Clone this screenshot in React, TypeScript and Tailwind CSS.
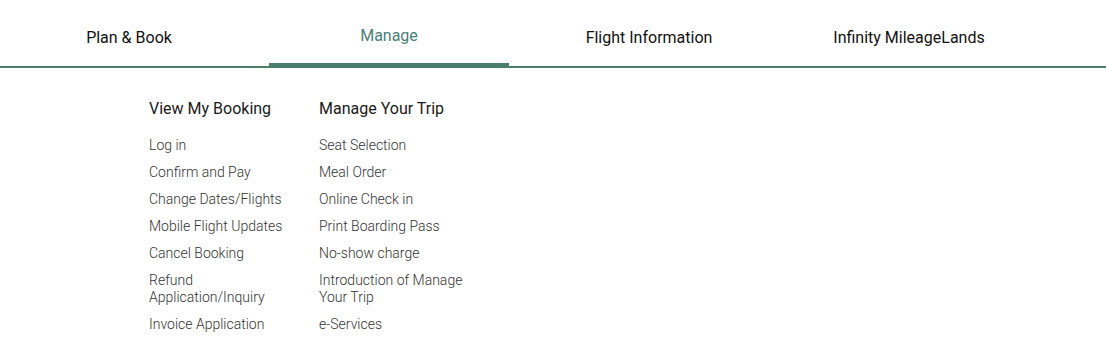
const TABS = ["Plan & Book", "Manage", "Flight Information", "Infinity MileageLands"];

const COLUMNS = [
  {
    title: "View My Booking",
    links: [
      "Log in",
      "Confirm and Pay",
      "Change Dates/Flights",
      "Mobile Flight Updates",
      "Cancel Booking",
      "Refund Application/Inquiry",
      "Invoice Application",
    ],
  },
  {
    title: "Manage Your Trip",
    links: [
      "Seat Selection",
      "Meal Order",
      "Online Check in",
      "Print Boarding Pass",
      "No-show charge",
      "Introduction of Manage Your Trip",
      "e-Services",
    ],
  },
];

export default function App() {
  return (
    <div className="h-[358px] w-full bg-white font-['Roboto',sans-serif]">
      {/* Top tabs */}
      <nav className="flex h-[68px] border-b-2 border-[#4b7d6b] pl-[9px]">
        {TABS.map((tab) => {
          const active = tab === "Manage";
          return (
            <div key={tab} className="relative mr-[20px] w-[240px]">
              <a
                href="#"
                className={
                  active
                    ? "flex h-full items-center justify-center pt-[6px] text-[16px] text-[#4a8078]"
                    : "flex h-full items-center justify-center pt-[9px] text-[16px] text-[#111]"
                }
              >
                {tab}
              </a>
              {active && (
                <span className="absolute bottom-[-2px] left-0 h-[5px] w-full bg-[#4b7d6b]" />
              )}
            </div>
          );
        })}
      </nav>

      {/* Manage dropdown */}
      <div className="flex gap-[20px] pl-[149px] pt-[29px]">
        {COLUMNS.map((col) => (
          <div key={col.title} className="w-[150px]">
            <h3 className="text-[16px] leading-[24px] text-[#1a1a1a]">{col.title}</h3>
            <ul className="mt-[16px] flex flex-col gap-[10px]">
              {col.links.map((link) => (
                <li key={link}>
                  <a href="#" className="block text-[14px] font-light leading-[17px] text-[#333]">
                    {link}
                  </a>
                </li>
              ))}
            </ul>
          </div>
        ))}
      </div>
    </div>
  );
}
